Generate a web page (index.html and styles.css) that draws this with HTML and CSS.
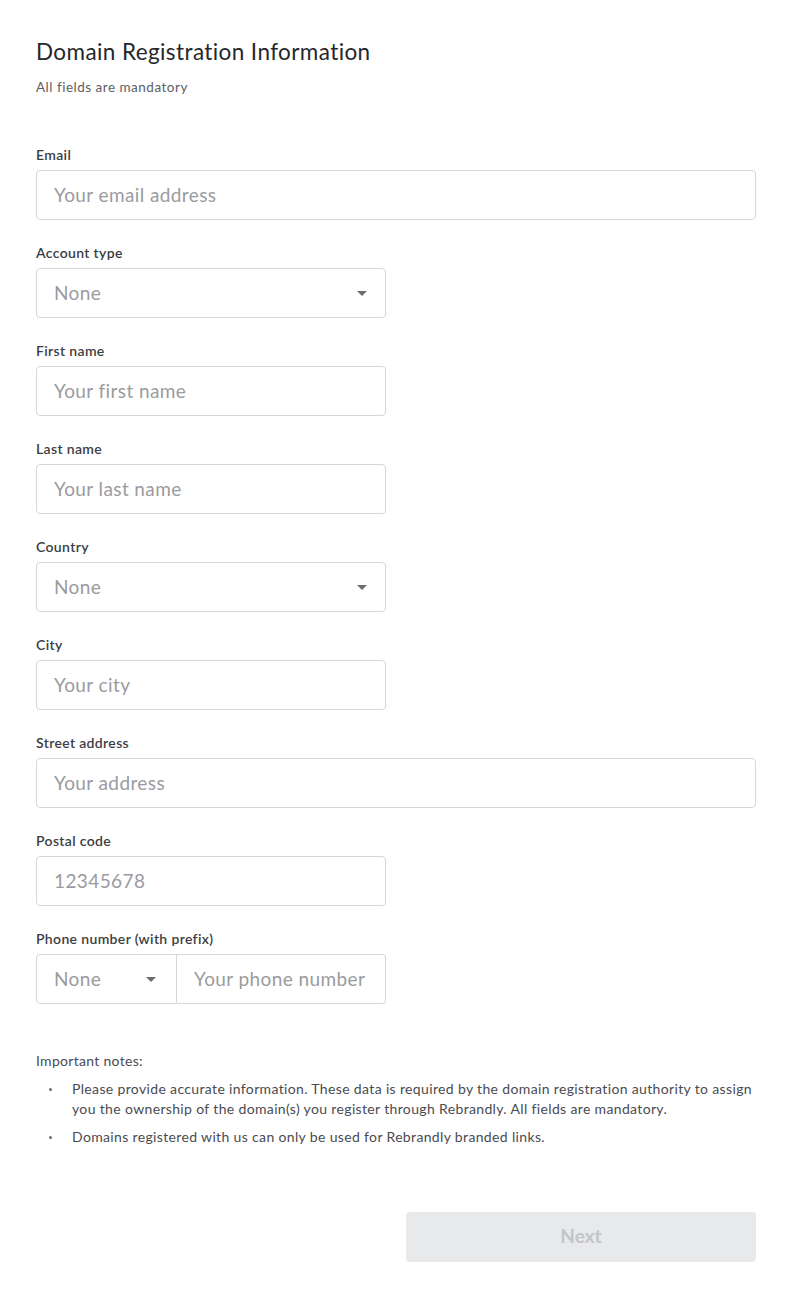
FILE: index.html
```html
<!DOCTYPE html>
<html lang="en">
<head>
<meta charset="utf-8">
<title>Domain Registration Information</title>
<link rel="stylesheet" href="styles.css">
</head>
<body>
<div class="page">
  <h1 class="title">Domain Registration Information</h1>
  <p class="subtitle">All fields are mandatory</p>

  <form class="form">
    <div class="group">
      <label class="label">Email</label>
      <div class="field full"><span class="ph">Your email address</span></div>
    </div>
    <div class="group">
      <label class="label">Account type</label>
      <div class="field half select"><span class="ph">None</span><span class="caret"></span></div>
    </div>
    <div class="group">
      <label class="label">First name</label>
      <div class="field half"><span class="ph">Your first name</span></div>
    </div>
    <div class="group">
      <label class="label">Last name</label>
      <div class="field half"><span class="ph">Your last name</span></div>
    </div>
    <div class="group">
      <label class="label">Country</label>
      <div class="field half select"><span class="ph">None</span><span class="caret"></span></div>
    </div>
    <div class="group">
      <label class="label">City</label>
      <div class="field half"><span class="ph">Your city</span></div>
    </div>
    <div class="group">
      <label class="label">Street address</label>
      <div class="field full"><span class="ph">Your address</span></div>
    </div>
    <div class="group">
      <label class="label">Postal code</label>
      <div class="field half"><span class="ph">12345678</span></div>
    </div>
    <div class="group">
      <label class="label">Phone number (with prefix)</label>
      <div class="phone">
        <div class="field prefix select"><span class="ph">None</span><span class="caret"></span></div>
        <div class="field number"><span class="ph">Your phone number</span></div>
      </div>
    </div>
  </form>

  <div class="notes">
    <p class="notes-title">Important notes:</p>
    <ul class="notes-list">
      <li>Please provide accurate information. These data is required by the domain registration authority to assign you the ownership of the domain(s) you register through Rebrandly. All fields are mandatory.</li>
      <li>Domains registered with us can only be used for Rebrandly branded links.</li>
    </ul>
  </div>

  <div class="actions">
    <button class="next" type="button">Next</button>
  </div>
</div>
</body>
</html>
```
FILE: styles.css
```css
* { box-sizing: border-box; }
html, body { margin: 0; padding: 0; background: #fff; }
body {
  font-family: "Lato", "Liberation Sans", sans-serif;
  color: #2a2b30;
}
.page {
  width: 792px;
  padding: 38px 36px 36px 36px;
}
.title {
  margin: 0;
  font-size: 22.5px;
  letter-spacing: 0.4px;
  line-height: 28px;
  font-weight: 400;
  color: #26272c;
}
.subtitle {
  margin: 12px 0 0 0;
  font-size: 13.5px;
  letter-spacing: 0.5px;
  line-height: 18px;
  color: #5d5e63;
}
.form {
  margin-top: 50px;
  display: flex;
  flex-direction: column;
  gap: 24px;
}
.group {
  display: flex;
  flex-direction: column;
  gap: 6px;
}
.label {
  font-size: 14px;
  letter-spacing: 0.35px;
  line-height: 18px;
  font-weight: 600;
  color: #3c3d42;
}
.field {
  height: 50px;
  border: 1px solid #d6d7da;
  border-radius: 4px;
  display: flex;
  align-items: center;
  padding: 0 17px 2px 17px;
  background: #fff;
}
.full { width: 720px; }
.half { width: 350px; }
.ph {
  font-size: 19px;
  letter-spacing: 0.4px;
  color: #9a9ba0;
  white-space: nowrap;
}
.select { justify-content: space-between; padding-right: 18px; }
.caret {
  width: 0; height: 0;
  margin-top: 2px;
  border-left: 5px solid transparent;
  border-right: 5px solid transparent;
  border-top: 5px solid #6c6d72;
}
.phone { display: flex; width: 350px; }
.prefix {
  width: 141px;
  border-radius: 4px 0 0 4px;
  padding-right: 20px;
}
.number {
  flex: 1;
  border-left: none;
  border-radius: 0 4px 4px 0;
}
.notes { margin-top: 47px; }
.notes-title {
  margin: 0;
  font-size: 14px;
  letter-spacing: 0.3px;
  line-height: 20px;
  color: #4a4b50;
}
.notes-list {
  margin: 8px 0 0 0;
  padding: 0 0 0 36px;
  font-size: 14px;
  letter-spacing: 0.35px;
  line-height: 20px;
  color: #4a4b50;
  list-style: none;
}
.notes-list li { position: relative; }
.notes-list li + li { margin-top: 8px; }
.notes-list li::before {
  content: "";
  position: absolute;
  left: -23px;
  top: 9px;
  width: 3px;
  height: 3px;
  border-radius: 50%;
  background: #6a6b70;
}
.actions {
  margin-top: 65px;
  display: flex;
  justify-content: flex-end;
}
.next {
  width: 350px;
  height: 50px;
  border: none;
  border-radius: 4px;
  background: #e8e9eb;
  color: #c3c4c7;
  font-family: "Lato", "Liberation Sans", sans-serif;
  font-size: 19px;
  font-weight: 700;
  padding: 0 0 3px 0;
}
```
